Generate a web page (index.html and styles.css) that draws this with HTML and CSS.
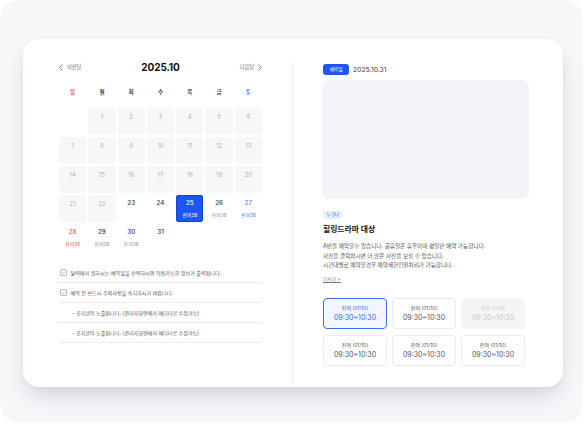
FILE: index.html
```html
<!DOCTYPE html>
<html lang="ko">
<head>
<meta charset="utf-8">
<title>예약 달력</title>
<link rel="stylesheet" href="styles.css">
</head>
<body>
<div class="frame">
  <div class="card">
    <section class="cal">
      <div class="cal-head">
        <div class="nav"><svg class="chev" viewBox="0 0 4 7"><polyline points="3.4,0.5 0.8,3.5 3.4,6.5"/></svg><span>이전달</span></div>
        <div class="title">2025.10</div>
        <div class="nav"><span>다음달</span><svg class="chev" viewBox="0 0 4 7"><polyline points="0.6,0.5 3.2,3.5 0.6,6.5"/></svg></div>
      </div>
      <div class="weekdays">
        <span class="sun">일</span><span>월</span><span>화</span><span>수</span><span>목</span><span>금</span><span class="sat">토</span>
      </div>
      <div class="days">
        <div class="day empty"></div>
        <div class="day off"><b>1</b></div>
        <div class="day off"><b>2</b></div>
        <div class="day off"><b>3</b></div>
        <div class="day off"><b>4</b></div>
        <div class="day off"><b>5</b></div>
        <div class="day off"><b>6</b></div>
        <div class="day off"><b>7</b></div>
        <div class="day off"><b>8</b></div>
        <div class="day off"><b>9</b></div>
        <div class="day off"><b>10</b></div>
        <div class="day off"><b>11</b></div>
        <div class="day off"><b>12</b></div>
        <div class="day off"><b>13</b></div>
        <div class="day off"><b>14</b></div>
        <div class="day off"><b>15</b></div>
        <div class="day off"><b>16</b></div>
        <div class="day off"><b>17</b></div>
        <div class="day off"><b>18</b></div>
        <div class="day off"><b>19</b></div>
        <div class="day off"><b>20</b></div>
        <div class="day off"><b>21</b></div>
        <div class="day off"><b>22</b></div>
        <div class="day"><b>23</b></div>
        <div class="day"><b>24</b></div>
        <div class="day selected"><b>25</b><small>잔여38</small></div>
        <div class="day"><b>26</b><small>잔여38</small></div>
        <div class="day sat"><b>27</b><small>잔여38</small></div>
        <div class="day sun"><b>28</b><small>잔여38</small></div>
        <div class="day"><b>29</b><small>잔여38</small></div>
        <div class="day"><b>30</b><small>잔여38</small></div>
        <div class="day"><b>31</b></div>
      </div>
      <ul class="notes">
        <li class="note"><svg class="check" viewBox="0 0 8 8"><rect x="0.5" y="0.5" width="7" height="7" rx="1.6"/><polyline points="2.2,4.1 3.5,5.3 5.8,2.8"/></svg><span>달력에서 원하시는 예약일을 선택하시면 이용가능한 정보가 출력됩니다.</span></li>
        <li class="note"><svg class="check" viewBox="0 0 8 8"><rect x="0.5" y="0.5" width="7" height="7" rx="1.6"/><polyline points="2.2,4.1 3.5,5.3 5.8,2.8"/></svg><span>예약 전 반드시 주의사항을 숙지하시기 바랍니다.</span></li>
        <li class="note sub"><span>- 공지글이 노출됩니다. (관리자화면에서 에디터로 수정가능)</span></li>
        <li class="note sub"><span>- 공지글이 노출됩니다. (관리자화면에서 에디터로 수정가능)</span></li>
      </ul>
    </section>
    <div class="divider"></div>
    <section class="detail">
      <div class="date-row">
        <span class="badge">예약일</span>
        <span class="date">2025.10.31</span>
      </div>
      <div class="photo"></div>
      <span class="tag">누구나</span>
      <h2 class="name">힐링드라마 대상</h2>
      <p class="desc">A반을 예약할수 있습니다. 공휴일은 휴무이며 평일만 예약 가능합니다.<br>사진을 클릭하시면 더 많은 사진을 보실 수 있습니다.<br>시간대별로 예약할경우 예약제한인원처리가 가능합니다.</p>
      <a class="more">더보기 &gt;</a>
      <div class="slots">
        <div class="slot active"><span class="lbl">잔여 (01/10)</span><span class="time">09:30~10:30</span></div>
        <div class="slot"><span class="lbl">잔여 (01/10)</span><span class="time">09:30~10:30</span></div>
        <div class="slot disabled"><span class="lbl">잔여 (0/10)</span><span class="time">09:30~10:30</span></div>
        <div class="slot"><span class="lbl">잔여 (01/10)</span><span class="time">09:30~10:30</span></div>
        <div class="slot"><span class="lbl">잔여 (01/10)</span><span class="time">09:30~10:30</span></div>
        <div class="slot"><span class="lbl">잔여 (01/10)</span><span class="time">09:30~10:30</span></div>
      </div>
    </section>
  </div>
</div>
</body>
</html>
```

FILE: styles.css
```css
* { box-sizing: border-box; }

html, body {
  margin: 0;
  padding: 0;
  background: #ffffff;
}

body {
  font-family: "Inter", "Noto Sans CJK KR", sans-serif;
  color: #333;
}

.frame {
  width: 583px;
  height: 423px;
  background: #f6f7f9;
  border-radius: 20px;
  padding: 39px 0 0 23px;
}

.card {
  width: 540px;
  height: 348px;
  background: #ffffff;
  border-radius: 16px;
  box-shadow: 0 12px 22px -4px rgba(30, 40, 60, 0.16), 0 2px 6px rgba(30, 40, 60, 0.04);
  display: flex;
}

/* ---------- calendar ---------- */
.cal {
  width: 269px;
  padding: 23px 30px 0 36px;
}

.cal-head {
  height: 10px;
  display: flex;
  align-items: center;
  justify-content: space-between;
}

.nav {
  display: flex;
  align-items: center;
  gap: 4px;
  font-size: 5.2px;
  color: #666;
  line-height: 10px;
}

.chev {
  width: 4px;
  height: 7px;
  fill: none;
  stroke: #666;
  stroke-width: 0.8;
}

.title {
  font-size: 10px;
  font-weight: 700;
  color: #111;
  line-height: 10px;
  letter-spacing: -0.1px;
}

.weekdays {
  margin-top: 15px;
  height: 10px;
  display: grid;
  grid-template-columns: repeat(7, 1fr);
  column-gap: 2px;
  font-size: 5.5px;
  font-weight: 700;
  line-height: 10px;
  text-align: center;
  color: #444;
}

.weekdays .sun { color: #f25a5a; }
.weekdays .sat { color: #4d84f2; }

.days {
  margin-top: 11px;
  display: grid;
  grid-template-columns: repeat(7, 1fr);
  grid-auto-rows: 27px;
  gap: 2px;
}

.day {
  border-radius: 3px;
  display: flex;
  flex-direction: column;
  align-items: center;
  padding-top: 4px;
}

.day b {
  font-size: 6.3px;
  font-weight: 500;
  line-height: 9px;
  color: #3a3a3a;
}

.day small {
  margin-top: 4px;
  font-size: 4.8px;
  line-height: 6px;
  color: #9a9a9a;
}

.day.off { background: #f7f7f8; }
.day.off b { color: #b4b4b4; font-weight: 400; font-size: 6px; }

.day.sun b, .day.sun small { color: #f25a5a; }
.day.sat b, .day.sat small { color: #4d84f2; }

.day.selected {
  background: #1f55f0;
  box-shadow: inset 0 0 0 1px #1443d6;
}
.day.selected b, .day.selected small { color: #ffffff; }

.notes {
  list-style: none;
  margin: 12px 0 0;
  padding: 0;
}

.note {
  height: 20px;
  border-bottom: 1px solid #ececec;
  display: flex;
  align-items: center;
  gap: 3.5px;
  padding-left: 1px;
  font-size: 5.1px;
  color: #555;
}

.note.sub { padding-left: 13px; }

.check {
  width: 7px;
  height: 7px;
  fill: none;
  stroke: #8a8a8a;
  stroke-width: 0.7;
  flex: none;
}

.divider {
  width: 1px;
  background: #eeeeee;
  margin: 24px 0 3px;
}

/* ---------- detail ---------- */
.detail {
  width: 270px;
  padding: 25px 34px 0 30px;
  display: flex;
  flex-direction: column;
  align-items: flex-start;
}

.date-row {
  height: 11px;
  display: flex;
  align-items: center;
  gap: 4px;
}

.badge {
  height: 11px;
  width: 26px;
  border-radius: 3px;
  background: #1f55f0;
  color: #fff;
  font-size: 4.8px;
  line-height: 11px;
  text-align: center;
}

.date {
  font-size: 6.8px;
  color: #444;
  line-height: 11px;
}

.photo {
  margin: 5px 0 0 -1px;
  width: 207px;
  height: 119px;
  border-radius: 8px;
  background: #f2f4f8;
}

.tag {
  margin-top: 12px;
  height: 8px;
  padding: 0 3.5px;
  border-radius: 2px;
  background: #e8effd;
  color: #3468e8;
  font-size: 4.5px;
  line-height: 8px;
}

.name {
  margin: 5px 0 0;
  font-size: 7.8px;
  font-weight: 700;
  line-height: 10px;
  color: #111;
}

.desc {
  margin: 8px 0 0;
  font-size: 5.6px;
  line-height: 9.7px;
  color: #555;
}

.more {
  margin-top: 4px;
  font-size: 4.8px;
  line-height: 8px;
  color: #777;
  text-decoration: underline;
}

.slots {
  margin-top: 15px;
  display: grid;
  grid-template-columns: repeat(3, 64px);
  grid-auto-rows: 31px;
  column-gap: 5px;
  row-gap: 6px;
}

.slot {
  border: 1px solid #ececec;
  border-radius: 4px;
  background: #fff;
  display: flex;
  flex-direction: column;
  align-items: center;
  justify-content: center;
  gap: 2px;
  color: #555;
}

.lbl {
  font-size: 5px;
  line-height: 6px;
}

.time {
  font-size: 7px;
  line-height: 9px;
  font-weight: 400;
}

.slot.active {
  border: 1.4px solid #3d6ef2;
  background: #f2f7ff;
  color: #3566ea;
}

.slot.disabled {
  border-color: #f5f5f6;
  background: #f5f5f6;
  color: #c9c9c9;
}
```
